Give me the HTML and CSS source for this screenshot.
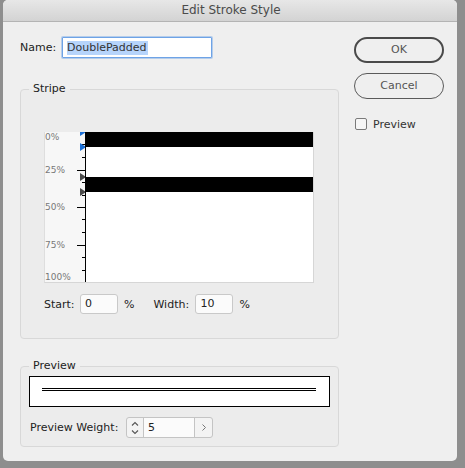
FILE: index.html
```html
<!DOCTYPE html>
<html>
<head>
<meta charset="utf-8">
<link rel="stylesheet" href="styles.css">
</head>
<body>
<div class="window">
  <div class="titlebar">Edit Stroke Style</div>
  <div class="content">
    <div class="main">
      <div class="name-row">
        <span class="label name-label">Name:</span>
        <div class="name-input"><span class="sel">DoublePadded</span></div>
      </div>

      <fieldset class="group stripe-group">
        <legend>Stripe</legend>
        <div class="chart">
          <div class="ruler">
            <span class="rlabel" style="top:0%">0%</span>
            <span class="rlabel mid" style="top:25%">25%</span>
            <span class="rlabel mid" style="top:50%">50%</span>
            <span class="rlabel mid" style="top:75%">75%</span>
            <span class="rlabel last">100%</span>

            <span class="tick minor" style="top:8.333%"></span>
            <span class="tick minor" style="top:16.667%"></span>
            <span class="tick major" style="top:25%"></span>
            <span class="tick minor" style="top:33.333%"></span>
            <span class="tick minor" style="top:41.667%"></span>
            <span class="tick major" style="top:50%"></span>
            <span class="tick minor" style="top:58.333%"></span>
            <span class="tick minor" style="top:66.667%"></span>
            <span class="tick major" style="top:75%"></span>
            <span class="tick minor" style="top:83.333%"></span>
            <span class="tick minor" style="top:91.667%"></span>

            <svg class="marker blue" style="top:0%" width="6" height="8" viewBox="0 0 6 8"><path d="M0 0 L6 4 L0 8 Z"/></svg>
            <svg class="marker blue" style="top:10%" width="6" height="8" viewBox="0 0 6 8"><path d="M0 0 L6 4 L0 8 Z"/></svg>
            <svg class="marker gray" style="top:30%" width="6" height="8" viewBox="0 0 6 8"><path d="M0 0 L6 4 L0 8 Z"/></svg>
            <svg class="marker gray" style="top:40%" width="6" height="8" viewBox="0 0 6 8"><path d="M0 0 L6 4 L0 8 Z"/></svg>
          </div>
          <div class="stripes">
            <div class="stripe" style="top:0%;height:10%"></div>
            <div class="stripe" style="top:30%;height:10%"></div>
          </div>
        </div>
        <div class="field-row">
          <span class="label start-label">Start:</span>
          <div class="num-input">0</div>
          <span class="label pct">%</span>
          <span class="label width-label">Width:</span>
          <div class="num-input">10</div>
          <span class="label pct">%</span>
        </div>
      </fieldset>

      <fieldset class="group preview-group">
        <legend>Preview</legend>
        <div class="preview-box"><div class="double-line"></div></div>
        <div class="weight-row">
          <span class="label weight-label">Preview Weight:</span>
          <div class="spinner">
            <div class="arrows">
              <svg width="10" height="16" viewBox="0 0 10 16"><path d="M2 5.5 L5 2.5 L8 5.5 M2 10.5 L5 13.5 L8 10.5" fill="none" stroke="#555" stroke-width="1.1"/></svg>
            </div>
            <div class="val">5</div>
            <div class="step">
              <svg width="6" height="9" viewBox="0 0 6 9"><path d="M1.5 1.5 L4.5 4.5 L1.5 7.5" fill="none" stroke="#777" stroke-width="1"/></svg>
            </div>
          </div>
        </div>
      </fieldset>
    </div>

    <div class="side">
      <div class="btn default">OK</div>
      <div class="btn">Cancel</div>
      <div class="check"><span class="box"></span><span class="label">Preview</span></div>
    </div>
  </div>
</div>
</body>
</html>
```

FILE: styles.css
```css
html, body {
  margin: 0;
  padding: 0;
}
body {
  background: #8e8e8e;
  width: 465px;
  height: 468px;
  overflow: hidden;
  font-family: "DejaVu Sans", sans-serif;
  font-size: 11px;
  color: #222;
}
.window {
  margin-left: 3px;
  width: 454px;
  height: 461px;
  background: #efefef;
  border-radius: 5px;
  overflow: hidden;
  box-sizing: border-box;
}
.titlebar {
  height: 21px;
  line-height: 21px;
  border-bottom: 1px solid #b4b4b4;
  background: linear-gradient(#e7e7e7, #d3d3d3);
  text-align: center;
  font-size: 12px;
  color: #4b4b4b;
  padding-left: 2px;
}
.content {
  display: flex;
  padding: 15px 0 0 17px;
}
.main {
  width: 319px;
}
.label {
  color: #222;
  white-space: nowrap;
}
.name-row {
  display: flex;
  align-items: center;
  height: 21px;
}
.name-label {
  width: 42px;
}
.name-input {
  box-sizing: border-box;
  width: 150px;
  height: 21px;
  background: #fff;
  border: 1px solid #6ea3e6;
  box-shadow: 0 0 0 1px rgba(110, 163, 230, 0.45);
  border-radius: 1px;
  padding-left: 4px;
  display: flex;
  align-items: center;
}
.sel {
  background: #b6d4fb;
  color: #333;
  line-height: 14px;
  padding: 0 1px 0 0;
}
.group {
  margin: 0;
  border: 1px solid #d8d8d8;
  border-radius: 4px;
  background: #ececec;
  padding: 0 0 0 8px;
  box-sizing: border-box;
  min-width: 0;
}
.group legend {
  padding: 0 4px 2px 4px;
  line-height: 13px;
  font-size: 11px;
  color: #222;
}
.stripe-group {
  margin-top: 24px;
  height: 257px;
}
.chart {
  margin: 35px 0 0 15px;
  width: 270px;
  height: 151px;
  box-sizing: border-box;
  display: flex;
  border-left: 1px solid #dedede;
  border-right: 1px solid #d6d6d6;
  border-bottom: 1px solid #d6d6d6;
}
.ruler {
  position: relative;
  width: 40px;
  height: 150px;
  background: #f7f7f7;
  border-right: 1px solid #000;
  overflow: hidden;
}
.rlabel {
  position: absolute;
  left: 0;
  font-size: 9px;
  line-height: 10px;
  color: #777;
}
.rlabel.mid {
  transform: translateY(-50%);
}
.rlabel.last {
  bottom: 0;
}
.tick {
  position: absolute;
  right: 0;
  height: 1px;
  background: #000;
}
.tick.minor {
  width: 3px;
}
.tick.major {
  width: 8px;
}
.marker {
  position: absolute;
  right: -1px;
  transform: translateY(-50%);
  display: block;
}
.marker.blue {
  fill: #1b6fd6;
}
.marker.gray {
  fill: #4a4a4a;
}
.stripes {
  position: relative;
  flex: 1;
  height: 150px;
  background: #fff;
}
.stripe {
  position: absolute;
  left: 0;
  right: 0;
  background: #000;
}
.field-row {
  display: flex;
  align-items: center;
  margin: 11px 0 0 15px;
  height: 20px;
}
.start-label {
  width: 36px;
}
.num-input {
  box-sizing: border-box;
  width: 38px;
  height: 20px;
  line-height: 18px;
  background: #fbfbfb;
  border: 1px solid #c9c9c9;
  border-radius: 3px;
  padding-left: 4px;
  color: #222;
}
.pct {
  margin-left: 6px;
}
.width-label {
  margin-left: 19px;
  width: 42px;
}
.preview-group {
  margin-top: 20px;
  height: 88px;
}
.preview-box {
  box-sizing: border-box;
  margin-top: 2px;
  width: 301px;
  height: 31px;
  border: 1px solid #000;
  background: #fff;
  padding: 11px 0 0 12px;
}
.double-line {
  width: 274px;
  height: 1px;
  border-top: 1px solid #000;
  border-bottom: 1px solid #000;
}
.weight-row {
  display: flex;
  align-items: center;
  margin: 10px 0 0 1px;
  height: 21px;
}
.weight-label {
  width: 96px;
}
.spinner {
  box-sizing: border-box;
  display: flex;
  width: 87px;
  height: 21px;
  border: 1px solid #c4c4c4;
  border-radius: 3px;
  background: #f3f3f3;
  overflow: hidden;
}
.arrows {
  width: 16px;
  border-right: 1px solid #c4c4c4;
  display: flex;
  align-items: center;
  justify-content: center;
}
.val {
  flex: 1;
  background: #fbfbfb;
  padding-left: 4px;
  line-height: 19px;
  color: #222;
}
.step {
  width: 17px;
  border-left: 1px solid #c4c4c4;
  display: flex;
  align-items: center;
  justify-content: center;
}
.side {
  margin-left: 15px;
  width: 90px;
}
.btn {
  box-sizing: border-box;
  height: 26px;
  border: 1px solid #5a5a5a;
  border-radius: 13px;
  text-align: center;
  line-height: 24px;
  color: #555;
}
.btn.default {
  border: 2px solid #4a4a4a;
  line-height: 22px;
}
.btn + .btn {
  margin-top: 10px;
}
.check {
  display: flex;
  align-items: center;
  margin: 19px 0 0 1px;
  height: 12px;
}
.check .box {
  box-sizing: border-box;
  width: 12px;
  height: 12px;
  border: 1px solid #7a7a7a;
  border-radius: 2px;
  background: #f6f6f6;
  margin-right: 6px;
}
.check .label {
  color: #333;
}
```
